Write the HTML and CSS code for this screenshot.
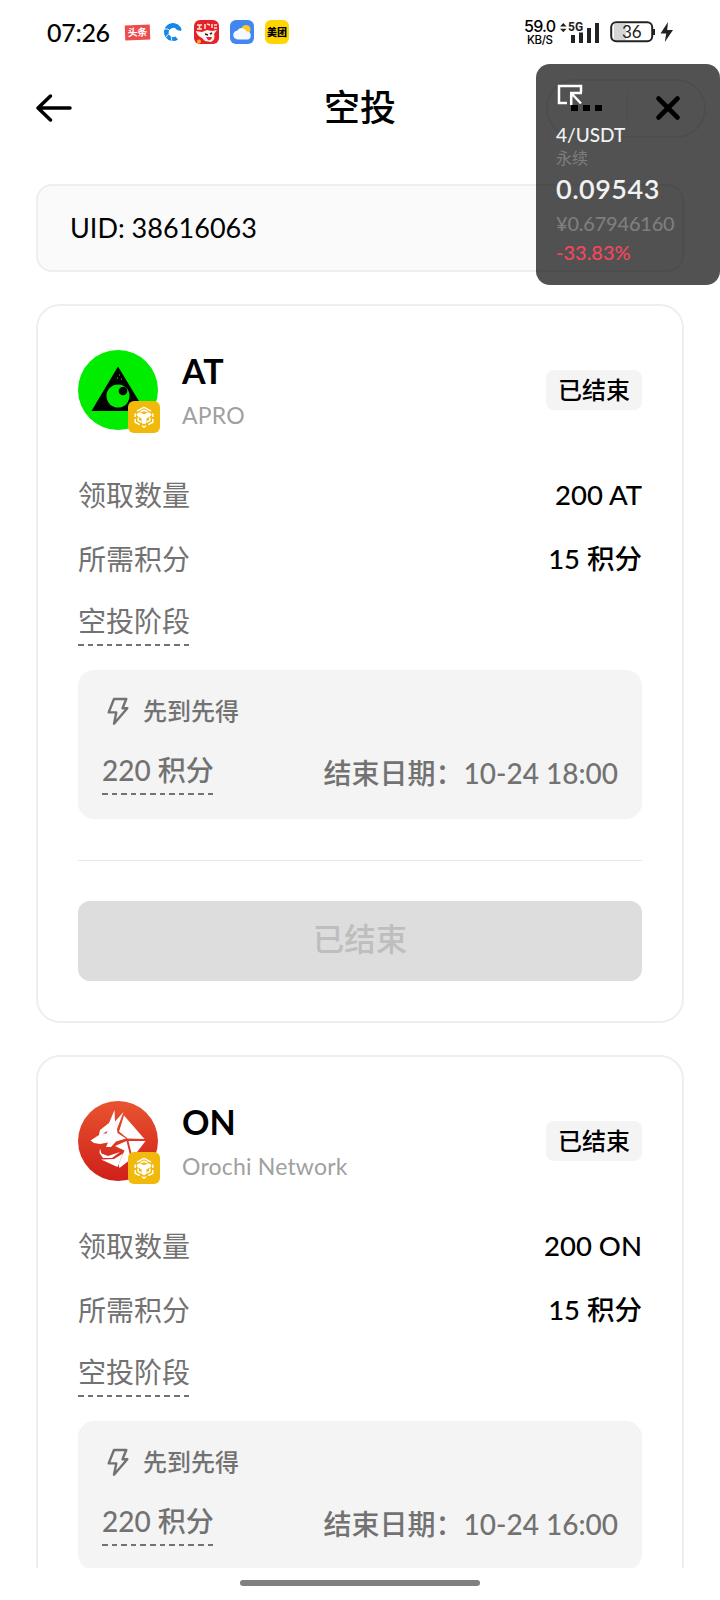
FILE: index.html
```
<!DOCTYPE html>
<html lang="zh-CN">
<head>
    <meta charset="UTF-8">
    <title>空投</title>
    <meta name="viewport" content="width=device-width, initial-scale=1.0">
    <link rel="stylesheet" href="styles.css">
</head>
<body>
    <svg class="defs" width="0" height="0">
        <symbol id="bnb" viewBox="0 0 32 32">
            <rect width="32" height="32" rx="6" fill="#f0b90b"/>
            <g fill="none" stroke="#fff" stroke-width="1.5">
                <path d="M9 10.200l7-3.800 7 3.800M7.200 12.500v3.500M24.800 12.500v3.500M7.200 18v3.200l4.500 2.500M24.800 18v3.200l-4.500 2.500"/>
                <path d="M10.200 16.500v3l3 1.700M21.800 16.500v3l-3 1.700M12.500 10.800l3.500-1.600 3.500 1.600"/>
            </g>
            <path d="M8.800 12.800l2.700-1.500 4.500 2 4.500-2 2.700 1.500v2l-4.700 2.600v4.500L16 23.300l-2.500-1.400v-4.500l-4.700-2.600z" fill="#fff"/>
            <path d="M13.800 24l2.200 1.200 2.200-1.200v1.600L16 27l-2.200-1.400z" fill="#fff"/>
        </symbol>
        <symbol id="bolt" viewBox="0 0 32 32">
            <path d="M12 4h12.300l-3.800 9.300h4.800L12 28.700l2.300-11.300H6.700z" fill="none" stroke="#727272" stroke-width="2.400" stroke-linejoin="round"/>
        </symbol>
    </svg>

    <!-- ステータスバー -->
    <div class="status-bar">
        <span class="clock">07:26</span>
        <div class="app-icons">
            <span class="toutiao">头条</span>
            <svg width="20" height="20" viewBox="0 0 20 20">
                <path d="M17.500 5A9 9 0 1 0 15 17.500L12.500 14.500A4.500 4.500 0 1 1 14 8l4 1q1-2-.5-4z" fill="#1688e8"/>
                <path d="M1 7q5-1 6 2M3 15q2-4 5-3M9 19q-2-4 1-6" fill="none" stroke="#fff" stroke-width="0.900"/>
            </svg>
            <svg width="25" height="24" viewBox="0 0 25 24">
                <rect width="25" height="24" rx="6" fill="#e6212a"/>
                <path d="M3 5h5M5.500 5v4M3 9h5M11 4v5M13 4l3 1M18 4v4M20 5h3M20 8h3" stroke="#ffe9d8" stroke-width="1.500" fill="none"/>
                <path d="M2 11l6 1 5-2 5 1 5-1-3 4q2 5-3 8l-6-1-3-3q-5-2-6-7z" fill="#fff4ef"/>
                <path d="M11 14l3 1M16 14l2-1" stroke="#222" stroke-width="1.400"/>
                <path d="M12 17h6q-1 4-4 3z" fill="#d0343a"/>
                <circle cx="5" cy="21.500" r="2" fill="#ffb31a"/>
            </svg>
            <svg width="24" height="24" viewBox="0 0 24 24">
                <rect width="24" height="24" rx="6" fill="#4286f0"/>
                <circle cx="16" cy="9.500" r="4.500" fill="#ffc928"/>
                <path d="M8 19.500a4.500 4.500 0 0 1-.5-9 5 5 0 0 1 9 1 4 4 0 0 1 .5 8z" fill="#f6f9ff"/>
            </svg>
            <span class="meituan">美团</span>
        </div>
        <div class="status-right">
            <svg class="net-speed" width="36" height="28" viewBox="0 0 36 28">
                <text x="1" y="14" textLength="32" class="speed-value">59.0</text>
                <text x="4" y="26" textLength="26" class="speed-unit">KB/S</text>
            </svg>
            <svg class="signal" width="42" height="26" viewBox="0 0 42 26">
                <path d="M1 7.500 4.300 4l3.300 3.500zM1 9.800h6.600l-3.300 3.500z" fill="#222"/>
                <text x="9" y="11.500" class="signal-label">5G</text>
                <path d="M12 16h4v8h-4zM20 13.500h4V24h-4zM28 9h4v15h-4zM36 4h4v20h-4z" fill="#222"/>
            </svg>
            <svg class="battery" width="64" height="24" viewBox="0 0 64 24">
                <path d="M4 4h12v16H4z" fill="#d5d5d5"/>
                <rect x="1.200" y="2.200" width="41" height="19" rx="5" fill="none" stroke="#222" stroke-width="2"/>
                <path d="M44 9v6" stroke="#222" stroke-width="2"/>
                <path d="M58 2 50.500 13.500h5.700L54.800 22 63 10h-5.800z" fill="#222"/>
                <text x="12" y="18" class="battery-label">36</text>
            </svg>
        </div>
    </div>

    <header class="nav-bar">
        <svg class="back" width="38" height="32" viewBox="0 0 38 32">
            <path d="M16.500 4 4 16l12.500 12M4 16h32" fill="none" stroke="#000" stroke-width="3.500" stroke-linecap="round" stroke-linejoin="round"/>
        </svg>
        <h1>空投</h1>
        <div class="capsule">
            <svg width="31" height="8" viewBox="0 0 31 8"><path d="M0 1h7v6H0zM12 1h7v6h-7zM24 1h7v6h-7z"/></svg>
            <i class="capsule-line"></i>
            <svg width="26" height="26" viewBox="0 0 26 26"><path d="M3.500 3.500l19 19M22.500 3.500l-19 19" stroke="#000" stroke-width="4.600" stroke-linecap="round"/></svg>
        </div>
    </header>

    <main class="content">
        <div class="uid">UID: 38616063</div>

        <section class="card">
            <div class="card-head">
                <div class="logo">
                    <svg width="80" height="80" viewBox="0 0 80 80">
                        <circle cx="40" cy="40" r="40" fill="#00ed00"/>
                        <path d="M40 16.500 67 61H13.500z"/>
                        <circle cx="40" cy="46" r="11.500" fill="#00ed00"/>
                        <circle cx="45" cy="41" r="4.300"/>
                        <path d="M39 28h1M43 29h1M41 25h1" stroke="#6b6" stroke-width="1"/>
                    </svg>
                    <svg class="chain" width="32" height="32"><use href="#bnb"/></svg>
                </div>
                <div class="token">
                    <h2>AT</h2>
                    <p>APRO</p>
                </div>
                <span class="tag">已结束</span>
            </div>
            <div class="row"><span>领取数量</span><b>200 AT</b></div>
            <div class="row"><span>所需积分</span><b>15 积分</b></div>
            <div class="row stage-title"><span class="dashed">空投阶段</span></div>
            <div class="stage">
                <div class="stage-name"><svg width="32" height="32"><use href="#bolt"/></svg>先到先得</div>
                <div class="stage-info">
                    <span class="dashed">220 积分</span>
                    <span class="end-date">结束日期：<time>10-24 18:00</time></span>
                </div>
            </div>
            <hr>
            <button class="claim" disabled>已结束</button>
        </section>

        <section class="card">
            <div class="card-head">
                <div class="logo">
                    <svg width="80" height="80" viewBox="0 0 80 80">
                        <defs>
                            <linearGradient id="orochi" x1="0" y1="0" x2="0" y2="1">
                                <stop offset="0" stop-color="#e8542f"/>
                                <stop offset="1" stop-color="#cf1f1a"/>
                            </linearGradient>
                        </defs>
                        <circle cx="40" cy="40" r="40" fill="url(#orochi)"/>
                        <path d="M12.500 39.500 21 34l1-5 9-7 5.500-13 .5 11.500L45.500 11l-6.500 17 .5 4 8.500 5.500-10 3-5 5.500-5 0 2-4.500-8 1.500-6-1z" fill="#fff"/>
                        <path d="M46 14.500 66.500 38l-17-.5-8.500-7z" fill="#fff"/>
                        <path d="M50.500 40H67.500L54.500 57z" fill="#fff"/>
                        <path d="M48.500 40 53 58 41.500 67l-1-3.500 6-14-5.500-2.500-4-2z" fill="#fff"/>
                        <path d="M22 47.500l1.500 5 6.500 2.500 12-4-8 6-9 0-3.500-5zM23 58.500l13-.5 9-5.500L39.500 66z" fill="#fff"/>
                        <path d="M25 32.500l4.500-2.500-1 2.500z" fill="#cf3a2a"/>
                    </svg>
                    <svg class="chain" width="32" height="32"><use href="#bnb"/></svg>
                </div>
                <div class="token">
                    <h2>ON</h2>
                    <p>Orochi Network</p>
                </div>
                <span class="tag">已结束</span>
            </div>
            <div class="row"><span>领取数量</span><b>200 ON</b></div>
            <div class="row"><span>所需积分</span><b>15 积分</b></div>
            <div class="row stage-title"><span class="dashed">空投阶段</span></div>
            <div class="stage">
                <div class="stage-name"><svg width="32" height="32"><use href="#bolt"/></svg>先到先得</div>
                <div class="stage-info">
                    <span class="dashed">220 积分</span>
                    <span class="end-date">结束日期：<time>10-24 16:00</time></span>
                </div>
            </div>
        </section>
    </main>

    <footer class="home-bar"><i></i></footer>

    <!-- フローティング価格ウィンドウ -->
    <aside class="ticker">
        <svg width="26" height="22" viewBox="0 0 26 22">
            <path d="M10 19H2V2h22v6" fill="none" stroke="#fff" stroke-width="2.500"/>
            <path d="M13 9h12M14.200 9v12M15 10l9 9.500" fill="none" stroke="#fff" stroke-width="2.500"/>
        </svg>
        <p class="pair">4/USDT</p>
        <p class="kind">永续</p>
        <p class="price">0.09543</p>
        <p class="cny">¥0.67946160</p>
        <p class="change">-33.83%</p>
    </aside>
</body>
</html>
```

FILE: styles.css
```
* {
    box-sizing: border-box;
}
body {
    margin: 0;
    width: 720px;
    height: 1600px;
    overflow: hidden;
    display: flex;
    flex-direction: column;
    position: relative;
    background-color: #fff;
    color: #000;
    font-family: Lato, "Noto Sans CJK SC", sans-serif;
}
h1, h2, p {
    margin: 0;
}
svg {
    display: block;
    flex: none;
}
.defs {
    position: absolute;
}

/* status bar */
.status-bar {
    display: flex;
    align-items: center;
    flex: none;
    height: 64px;
    padding: 0 46px 0 47px;
}
.clock {
    width: 78px;
    font-size: 25px;
    font-weight: 500;
    letter-spacing: -0.3px;
    line-height: 32px;
}
.app-icons {
    display: flex;
    align-items: center;
    gap: 11px;
}
.toutiao {
    width: 25px;
    height: 15px;
    margin-right: 2px;
    background-color: #ee4b4b;
    color: #fff;
    font-size: 10px;
    font-weight: 700;
    line-height: 14px;
    text-align: center;
    transform: rotate(-2deg);
}
.meituan {
    width: 24px;
    height: 24px;
    border-radius: 6px;
    background-color: #ffd500;
    font-size: 10px;
    font-weight: 900;
    line-height: 24px;
    text-align: center;
}
.status-right {
    display: flex;
    align-items: center;
    margin-left: auto;
}
.speed-value {
    font: 500 16px Inter, sans-serif;
}
.speed-unit {
    font: 500 11.5px Inter, sans-serif;
}
.signal {
    margin-right: 9px;
}
.signal-label {
    font: 700 12px Roboto, sans-serif;
    fill: #222;
}
.battery-label {
    font: 400 17px Lato, sans-serif;
    fill: #222;
}

/* navigation */
.nav-bar {
    display: flex;
    align-items: center;
    flex: none;
    height: 88px;
    padding: 0 14px 0 34px;
}
.nav-bar h1 {
    margin-left: 252px;
    padding-bottom: 3px;
    font-size: 36px;
    font-weight: 500;
    line-height: 48px;
}
.capsule {
    display: flex;
    align-items: center;
    width: 160px;
    height: 59px;
    margin-left: auto;
    padding-left: 23px;
    border: 2px solid #eee;
    border-radius: 30px;
}
.capsule-line {
    width: 1px;
    height: 36px;
    margin: 0 27px 0 25px;
    background-color: #eee;
}

.content {
    display: flex;
    flex-direction: column;
    flex: none;
    gap: 32px;
    height: 1416px;
    padding: 32px 36px 0;
    overflow: hidden;
}
.uid {
    flex: none;
    height: 88px;
    padding-left: 32px;
    border: 2px solid #eee;
    border-radius: 16px;
    background-color: #fafafa;
    font-size: 27px;
    line-height: 83px;
}

/* airdrop card */
.card {
    flex: none;
    height: 719px;
    padding: 44px 40px 0;
    border: 2px solid #eee;
    border-radius: 24px;
}
.card-head {
    display: flex;
    align-items: center;
    height: 80px;
    margin-bottom: 33px;
}
.logo {
    position: relative;
    width: 80px;
    height: 80px;
}
.chain {
    position: absolute;
    left: 50px;
    top: 51px;
}
.token {
    margin-left: 24px;
    padding-top: 6px;
}
.token h2 {
    font-size: 34px;
    font-weight: 700;
    line-height: 44px;
}
.token p {
    color: #a0a0a0;
    font-size: 23px;
    letter-spacing: 0.2px;
    line-height: 45px;
}
.tag {
    width: 96px;
    height: 40px;
    margin-left: auto;
    border-radius: 8px;
    background-color: #f4f4f4;
    font-size: 24px;
    font-weight: 500;
    line-height: 39px;
    text-align: center;
}
.row {
    display: flex;
    justify-content: space-between;
    height: 64px;
    font-size: 28px;
    line-height: 64px;
}
.row span {
    color: #727272;
}
.row b {
    font-size: 27.5px;
    font-weight: 500;
}
.dashed {
    height: 44px;
    /* 破線の下線 */
    background: repeating-linear-gradient(to right, #727272 0 5.600px, transparent 5.600px 9.600px) left bottom / 100% 2px no-repeat;
    line-height: 38px;
}
.stage-title {
    height: 79px;
    padding-top: 11px;
}
.stage {
    height: 149px;
    padding: 24px;
    border-radius: 16px;
    background-color: #f4f4f4;
    color: #727272;
    font-weight: 500;
}
.stage-name {
    display: flex;
    align-items: center;
    gap: 9px;
    height: 34px;
    font-size: 24px;
    line-height: 34px;
}
.stage-info {
    display: flex;
    justify-content: space-between;
    margin-top: 23px;
    font-size: 28px;
}
.end-date {
    line-height: 45px;
}
.card hr {
    height: 1px;
    margin: 41px 0 40px;
    border: 0;
    background-color: #e8e8e8;
}
.claim {
    display: block;
    width: 100%;
    height: 80px;
    padding: 0 0 8px;
    border: 0;
    border-radius: 12px;
    background-color: #ddd;
    color: #bebebe;
    font-family: inherit;
    font-size: 31.5px;
    font-weight: 500;
}

.home-bar {
    display: flex;
    justify-content: center;
    padding-top: 12px;
}
.home-bar i {
    width: 240px;
    height: 6px;
    border-radius: 3px;
    background-color: #808080;
}

/* floating price window */
.ticker {
    position: absolute;
    left: 536px;
    top: 64px;
    width: 184px;
    height: 221px;
    padding: 20px 0 0 20px;
    border-radius: 14px;
    background-color: rgba(0, 0, 0, 0.68);
    color: #f2f2f2;
}
.ticker svg {
    margin-left: 1px;
}
.pair {
    margin-top: 16px;
    font-size: 19px;
    font-weight: 500;
    line-height: 26px;
}
.kind {
    color: #7e7e7e;
    font-size: 16px;
    line-height: 20px;
}
.price {
    margin-top: 3px;
    font-size: 27px;
    font-weight: 600;
    letter-spacing: 0.5px;
    line-height: 36px;
}
.cny {
    margin-top: 2px;
    color: #7e7e7e;
    font-size: 20px;
    font-weight: 500;
    letter-spacing: -0.2px;
    line-height: 28px;
}
.change {
    margin-top: 1px;
    color: #f6465d;
    font-size: 20px;
    font-weight: 500;
    line-height: 28px;
}
```
